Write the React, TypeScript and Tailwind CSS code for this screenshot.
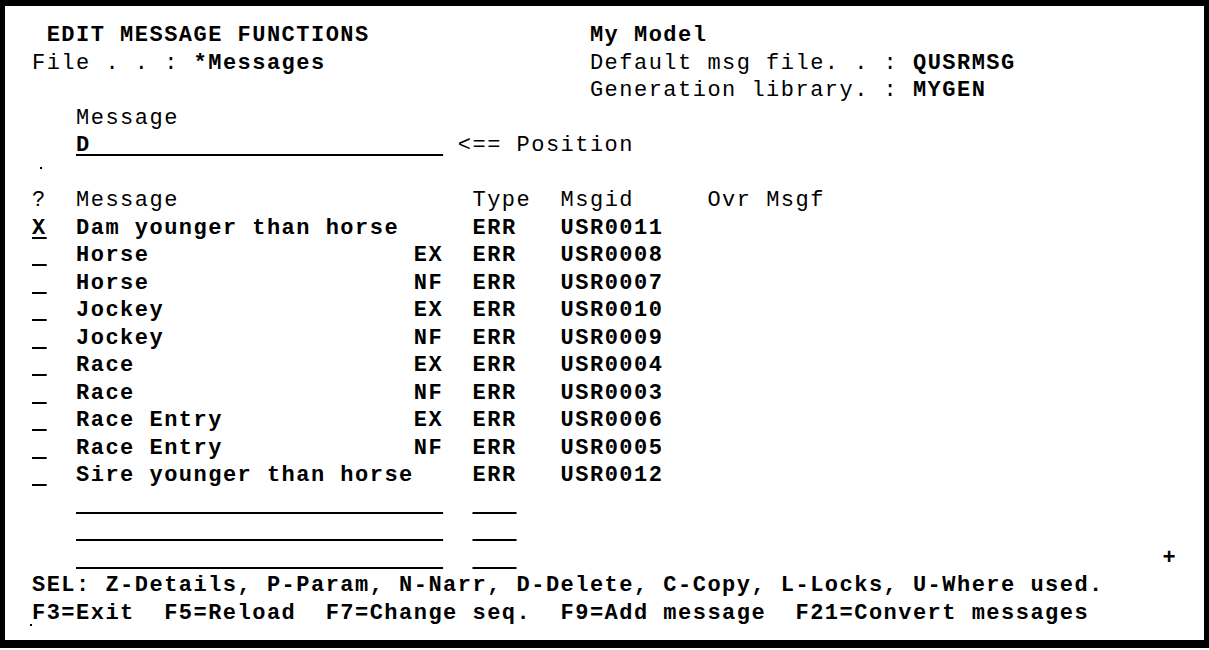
import React from "react";

type Seg = { t: string; b?: boolean; u?: boolean };

const N = "\u00a0";
const sp = (n: number): Seg => ({ t: " ".repeat(n) });
const txt = (t: string): Seg => ({ t });
const bold = (t: string): Seg => ({ t, b: true });
const field = (n: number, value = "", b = false): Seg => ({ t: value + N.repeat(n - value.length), u: true, b });

const messages = [
    { sel: "X", text: "Dam younger than horse", sub: "", type: "ERR", id: "USR0011" },
    { sel: "", text: "Horse", sub: "EX", type: "ERR", id: "USR0008" },
    { sel: "", text: "Horse", sub: "NF", type: "ERR", id: "USR0007" },
    { sel: "", text: "Jockey", sub: "EX", type: "ERR", id: "USR0010" },
    { sel: "", text: "Jockey", sub: "NF", type: "ERR", id: "USR0009" },
    { sel: "", text: "Race", sub: "EX", type: "ERR", id: "USR0004" },
    { sel: "", text: "Race", sub: "NF", type: "ERR", id: "USR0003" },
    { sel: "", text: "Race Entry", sub: "EX", type: "ERR", id: "USR0006" },
    { sel: "", text: "Race Entry", sub: "NF", type: "ERR", id: "USR0005" },
    { sel: "", text: "Sire younger than horse", sub: "", type: "ERR", id: "USR0012" },
];

function Row({ segs }: { segs: Seg[] }) {
    return (
        <div className="h-[27.5px] whitespace-pre">
            {segs.map((s, i) => (
                <span
                    key={i}
                    className={`${s.b ? "font-bold" : "font-normal"} ${s.u ? "underline decoration-2 underline-offset-[3px]" : ""}`}
                >
                    {s.t}
                </span>
            ))}
        </div>
    );
}

export default function App() {
    return (
        <div className="h-[650px] w-[1209px] bg-white">
            <div className="h-[648px] border-t-[6px] border-l-[5px] border-r-[5px] border-b-[8px] border-black bg-white pt-[16px] pl-[27px] text-black font-['Liberation_Mono',monospace] text-[22px] leading-[27.5px] tracking-[1.48px]">
                {/* header */}
                <Row segs={[sp(1), bold("EDIT MESSAGE FUNCTIONS"), sp(15), bold("My Model")]} />
                <Row segs={[txt("File . . : "), bold("*Messages"), sp(18), txt("Default msg file. . : "), bold("QUSRMSG")]} />
                <Row segs={[sp(38), txt("Generation library. : "), bold("MYGEN")]} />
                <Row segs={[sp(3), txt("Message")]} />
                <Row segs={[sp(3), field(25, "D", true), sp(1), txt("<== Position")]} />
                <div className="h-[27.5px]">
                    <div className="ml-[8px] pt-[7px]">
                        <div className="h-[2px] w-[2px] bg-black" />
                    </div>
                </div>

                {/* list */}
                <Row segs={[txt("?  Message"), sp(20), txt("Type"), sp(2), txt("Msgid"), sp(5), txt("Ovr Msgf")]} />
                {messages.map((m, i) => (
                    <Row
                        key={i}
                        segs={[
                            field(1, m.sel, true),
                            sp(2),
                            bold(m.text.padEnd(23, " ")),
                            bold(m.sub.padEnd(2, " ")),
                            sp(2),
                            bold(m.type),
                            sp(3),
                            bold(m.id),
                        ]}
                    />
                ))}
                <Row segs={[sp(3), field(25), sp(2), field(3)]} />
                <Row segs={[sp(3), field(25), sp(2), field(3)]} />
                <Row segs={[sp(3), field(25), sp(2), field(3), sp(44), bold("+")]} />

                {/* footer */}
                <Row segs={[bold("SEL: Z-Details, P-Param, N-Narr, D-Delete, C-Copy, L-Locks, U-Where used.")]} />
                <Row segs={[bold("F3=Exit  F5=Reload  F7=Change seq.  F9=Add message  F21=Convert messages")]} />
                <div className="-mt-[3px] ml-[-2px] h-[2px] w-[2px] bg-black" />
            </div>
        </div>
    );
}
